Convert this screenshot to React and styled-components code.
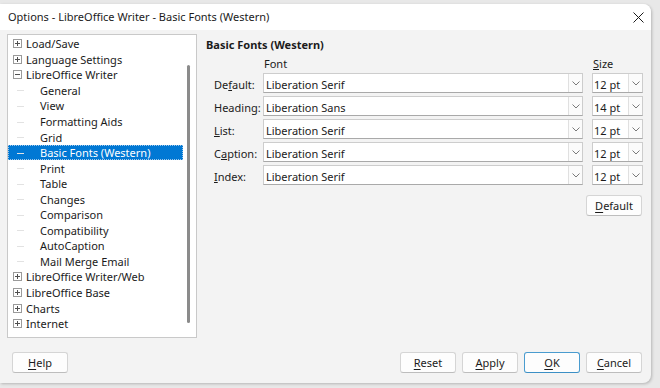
import React from 'react'
import styled, { createGlobalStyle } from 'styled-components'

const GlobalStyle = createGlobalStyle`
  html, body {
    margin: 0;
    padding: 0;
    background: #e8e8e8;
  }
  body {
    font-family: "Noto Sans", "Open Sans", "Liberation Sans", sans-serif;
    font-size: 11px;
    color: #1b1b1b;
  }
`

const treeItems = [
  { label: 'Load/Save', level: 0, box: 'plus' },
  { label: 'Language Settings', level: 0, box: 'plus' },
  { label: 'LibreOffice Writer', level: 0, box: 'minus' },
  { label: 'General', level: 1 },
  { label: 'View', level: 1 },
  { label: 'Formatting Aids', level: 1 },
  { label: 'Grid', level: 1 },
  { label: 'Basic Fonts (Western)', level: 1, selected: true },
  { label: 'Print', level: 1 },
  { label: 'Table', level: 1 },
  { label: 'Changes', level: 1 },
  { label: 'Comparison', level: 1 },
  { label: 'Compatibility', level: 1 },
  { label: 'AutoCaption', level: 1 },
  { label: 'Mail Merge Email', level: 1 },
  { label: 'LibreOffice Writer/Web', level: 0, box: 'plus' },
  { label: 'LibreOffice Base', level: 0, box: 'plus' },
  { label: 'Charts', level: 0, box: 'plus' },
  { label: 'Internet', level: 0, box: 'plus' },
]

const fontRows = [
  { pre: 'De', key: 'f', post: 'ault:', font: 'Liberation Serif', size: '12 pt' },
  { pre: 'Headin', key: 'g', post: ':', font: 'Liberation Sans', size: '14 pt' },
  { pre: '', key: 'L', post: 'ist:', font: 'Liberation Serif', size: '12 pt' },
  { pre: 'C', key: 'a', post: 'ption:', font: 'Liberation Serif', size: '12 pt' },
  { pre: '', key: 'I', post: 'ndex:', font: 'Liberation Serif', size: '12 pt' },
]

function Chevron() {
  return (
    <svg width="8" height="5" viewBox="0 0 8 5">
      <path d="M0.5 0.5 L4 4 L7.5 0.5" fill="none" stroke="#7a7a7a" strokeWidth="1" />
    </svg>
  )
}

function ExpandBox({ type }) {
  return (
    <svg width="9" height="9" viewBox="0 0 9 9">
      <rect x="0.5" y="0.5" width="8" height="8" fill="#fff" stroke="#9a9a9a" />
      <path d="M2 4.5 H7" stroke="#505050" />
      {type === 'plus' && <path d="M4.5 2 V7" stroke="#505050" />}
    </svg>
  )
}

export default function App() {
  return (
    <>
      <GlobalStyle />
      <Page>
        <Window>
          <TitleBar>
            <span>Options - LibreOffice Writer - Basic Fonts (Western)</span>
            <CloseButton>
              <svg width="11" height="11" viewBox="0 0 11 11">
                <path d="M0.5 0.5 L10.5 10.5 M10.5 0.5 L0.5 10.5" stroke="#1b1b1b" strokeWidth="1" />
              </svg>
            </CloseButton>
          </TitleBar>
          <Body>
            <Tree>
              <TreeList>
                {treeItems.map((item) => (
                  <TreeRow key={item.label} $level={item.level} $selected={item.selected}>
                    {item.box ? (
                      <BoxSlot>
                        <ExpandBox type={item.box} />
                      </BoxSlot>
                    ) : (
                      <Branch />
                    )}
                    <span>{item.label}</span>
                  </TreeRow>
                ))}
              </TreeList>
              <ScrollTrack>
                <Thumb />
              </ScrollTrack>
            </Tree>

            <Panel>
              <PanelTitle>Basic Fonts (Western)</PanelTitle>
              <FontGrid>
                <span />
                <ColHead>Font</ColHead>
                <ColHead>
                  <u>S</u>ize
                </ColHead>
                {fontRows.map((row) => (
                  <React.Fragment key={row.pre + row.key}>
                    <RowLabel>
                      {row.pre}
                      <u>{row.key}</u>
                      {row.post}
                    </RowLabel>
                    <Combo>
                      <ComboText>{row.font}</ComboText>
                      <ComboButton>
                        <Chevron />
                      </ComboButton>
                    </Combo>
                    <Combo>
                      <ComboText $narrow>{row.size}</ComboText>
                      <ComboButton>
                        <Chevron />
                      </ComboButton>
                    </Combo>
                  </React.Fragment>
                ))}
              </FontGrid>
              <DefaultRow>
                <Button>
                  <u>D</u>efault
                </Button>
              </DefaultRow>
            </Panel>

            <Footer>
              <Button>
                <u>H</u>elp
              </Button>
              <FooterRight>
                <Button>
                  <u>R</u>eset
                </Button>
                <Button>
                  <u>A</u>pply
                </Button>
                <Button $primary>
                  <u>O</u>K
                </Button>
                <Button>
                  <u>C</u>ancel
                </Button>
              </FooterRight>
            </Footer>
          </Body>
        </Window>
      </Page>
    </>
  )
}

const Page = styled.div`
  width: 660px;
  height: 388px;
  padding-top: 4px;
  box-sizing: border-box;
  overflow: hidden;
`

const Window = styled.div`
  width: 651px;
  height: 379px;
  background: #f3f3f3;
  border-radius: 0 8px 8px 0;
  box-shadow: 1px 1px 3px rgba(0, 0, 0, 0.22);
  display: flex;
  flex-direction: column;
  overflow: hidden;
`

const TitleBar = styled.div`
  height: 26px;
  flex: none;
  background: #ffffff;
  display: flex;
  align-items: center;
  justify-content: space-between;
  padding-left: 8px;
  line-height: 16px;
`

const CloseButton = styled.div`
  width: 26px;
  display: flex;
  justify-content: center;
`

const Body = styled.div`
  flex: 1;
  display: grid;
  grid-template-columns: 190px minmax(0, 1fr);
  grid-template-rows: 304px auto;
  column-gap: 9px;
  row-gap: 14px;
  padding: 4px 0 0 7px;
`

const Tree = styled.div`
  background: #ffffff;
  border: 1px solid #c9c9c9;
  display: flex;
  box-sizing: border-box;
`

const TreeList = styled.div`
  flex: 1;
  padding-top: 1px;
`

const TreeRow = styled.div`
  height: 15.55px;
  display: flex;
  align-items: center;
  white-space: nowrap;
  padding-left: ${(p) => (p.$level ? 8 : 5)}px;
  background: ${(p) => (p.$selected ? '#0078d4' : 'transparent')};
  color: ${(p) => (p.$selected ? '#ffffff' : '#1b1b1b')};
  outline: ${(p) => (p.$selected ? '1px dotted #9fc7ea' : 'none')};
  outline-offset: -1px;
  line-height: 15px;
`

const BoxSlot = styled.span`
  width: 13px;
  display: flex;
`

const Branch = styled.span`
  width: 24px;
  height: 100%;
  position: relative;
  &::before {
    content: '';
    position: absolute;
    left: 1px;
    top: 50%;
    width: 7px;
    border-top: 1px solid #e2e2e2;
  }
`

const ScrollTrack = styled.div`
  width: 13px;
  flex: none;
  padding: 30px 0 14px 4px;
  box-sizing: border-box;
  display: flex;
`

const Thumb = styled.div`
  width: 3px;
  background: #8b8b8b;
  border-radius: 2px;
`

const Panel = styled.div`
  display: flex;
  flex-direction: column;
`

const PanelTitle = styled.div`
  font-weight: 700;
  line-height: 16px;
  padding-top: 3px;
`

const FontGrid = styled.div`
  display: grid;
  grid-template-columns: 40px 320px 51px;
  column-gap: 9px;
  row-gap: 3px;
  padding-left: 8px;
  grid-auto-rows: 20px;
  grid-template-rows: 17px;
`

const ColHead = styled.div`
  line-height: 14px;
  padding: 4px 0 0 1px;
`

const RowLabel = styled.div`
  display: flex;
  align-items: center;
  white-space: nowrap;
  padding-top: 3px;
`

const Combo = styled.div`
  display: flex;
  background: #ffffff;
  border: 1px solid #cdcdcd;
  border-bottom-color: #a9a9a9;
  box-sizing: border-box;
  height: 20px;
`

const ComboText = styled.div`
  flex: 1;
  display: flex;
  align-items: center;
  padding: 2px 0 0 ${(p) => (p.$narrow ? 1 : 2)}px;
  white-space: nowrap;
  overflow: hidden;
`

const ComboButton = styled.div`
  width: 13px;
  flex: none;
  border-left: 1px solid #e0e0e0;
  background: #fbfbfb;
  display: flex;
  align-items: center;
  justify-content: center;
`

const DefaultRow = styled.div`
  display: flex;
  justify-content: flex-end;
  margin-top: 10px;
  padding-right: 9px;
`

const Footer = styled.div`
  grid-column: 1 / -1;
  display: flex;
  justify-content: space-between;
  padding: 0 9px 0 5px;
`

const FooterRight = styled.div`
  display: flex;
  gap: 6px;
`

const Button = styled.div`
  width: 56px;
  height: 21px;
  box-sizing: border-box;
  display: flex;
  align-items: center;
  justify-content: center;
  padding-top: 1px;
  background: #fdfdfd;
  border: 1px solid ${(p) => (p.$primary ? '#4a9ccf' : '#d5d5d5')};
  border-bottom-color: ${(p) => (p.$primary ? '#3b8fc5' : '#bdbdbd')};
  border-radius: 3px;
  line-height: 16px;
  u {
    text-underline-offset: 2px;
  }
`
